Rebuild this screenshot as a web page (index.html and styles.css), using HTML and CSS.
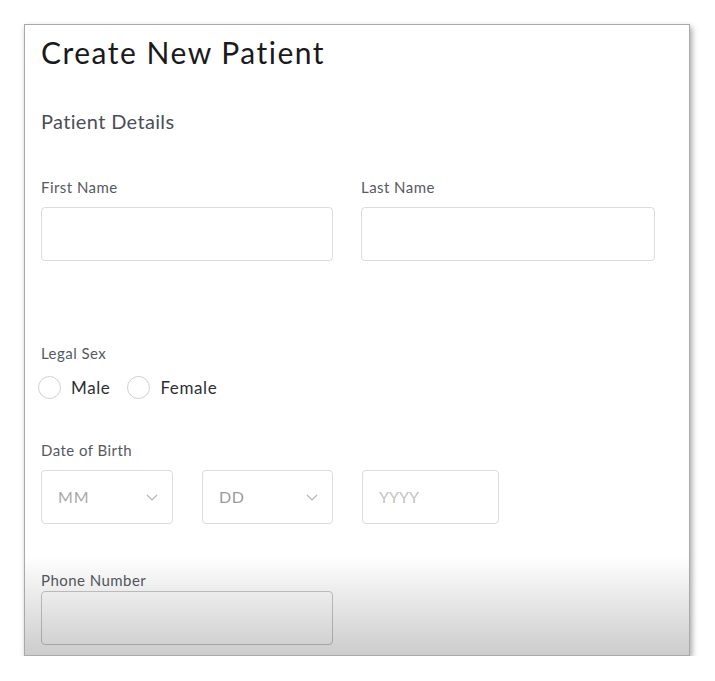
FILE: index.html
```html
<!DOCTYPE html>
<html lang="en">
<head>
<meta charset="utf-8">
<title>Create New Patient</title>
<link rel="stylesheet" href="styles.css">
</head>
<body>
<div class="card">
  <h1 class="title">Create New Patient</h1>
  <h2 class="section">Patient Details</h2>

  <div class="name-row">
    <div class="field">
      <label class="label">First Name</label>
      <div class="input"></div>
    </div>
    <div class="field">
      <label class="label">Last Name</label>
      <div class="input"></div>
    </div>
  </div>

  <div class="field sex">
    <label class="label">Legal Sex</label>
    <div class="radios">
      <span class="radio"><span class="circle"></span>Male</span>
      <span class="radio"><span class="circle"></span>Female</span>
    </div>
  </div>

  <div class="field dob">
    <label class="label">Date of Birth</label>
    <div class="date-row">
      <div class="select mm"><span class="ph ph-mm">MM</span>
        <svg class="chev" width="12" height="7" viewBox="0 0 12 7"><path d="M1 1l5 5 5-5" fill="none" stroke="#b5b5b5" stroke-width="1.2"/></svg>
      </div>
      <div class="select dd"><span class="ph ph-dd">DD</span>
        <svg class="chev" width="12" height="7" viewBox="0 0 12 7"><path d="M1 1l5 5 5-5" fill="none" stroke="#b5b5b5" stroke-width="1.2"/></svg>
      </div>
      <div class="select yyyy"><span class="ph ph-yy">YYYY</span></div>
    </div>
  </div>

  <div class="field phone">
    <label class="label">Phone Number</label>
    <div class="input phone-input"></div>
  </div>
</div>
</body>
</html>
```

FILE: styles.css
```css
html, body {
  margin: 0;
  padding: 0;
  background: #ffffff;
}
body {
  padding: 24px 0 0 24px;
  font-family: Lato, "Noto Sans", sans-serif;
}
.card {
  position: relative;
  border: 1px solid #a9a9a9;
  background: #fff;
  box-shadow: 2px 3px 6px rgba(0,0,0,0.35);
  padding: 9px 33px 10px 16px;
  box-sizing: content-box;
  width: 615px;
}
.card::after {
  content: "";
  position: absolute;
  left: 0;
  right: 0;
  bottom: 0;
  height: 100px;
  background: linear-gradient(to bottom, rgba(0,0,0,0), rgba(0,0,0,0.2));
  pointer-events: none;
}
.title {
  margin: 0;
  font-size: 30px;
  line-height: 36px;
  font-weight: 400;
  letter-spacing: 1.5px;
  color: #1a1a1c;
}
.section {
  margin: 39px 0 0;
  font-size: 20px;
  line-height: 24px;
  font-weight: 400;
  letter-spacing: 0.35px;
  color: #4a4e57;
}
.name-row {
  display: grid;
  grid-template-columns: 292px 294px;
  column-gap: 28px;
  margin-top: 46px;
}
.field {
  display: flex;
  flex-direction: column;
}
.label {
  font-size: 15px;
  line-height: 17px;
  letter-spacing: 0.45px;
  color: #555a61;
}
.input {
  height: 52px;
  margin-top: 11px;
  border: 1px solid #dcdcdc;
  border-radius: 4px;
  background: #fff;
}
.sex {
  margin-top: 84px;
}
.radios {
  display: flex;
  align-items: center;
  margin-top: 14px;
  gap: 20px;
}
.radio {
  display: flex;
  align-items: center;
  font-size: 17px;
  line-height: 22px;
  letter-spacing: 0.6px;
  color: #2e2f33;
}
.circle {
  width: 21px;
  height: 21px;
  border: 1px solid #cfcfcf;
  border-radius: 50%;
  margin: 0 10px 0 -3px;
  background: #fff;
}
.dob {
  margin-top: 43px;
}
.date-row {
  display: flex;
  gap: 29px;
  margin-top: 11px;
}
.select {
  border: 1px solid #dcdcdc;
  border-radius: 4px;
  display: flex;
  align-items: center;
  justify-content: space-between;
  padding: 0 14px 0 16px;
  box-sizing: border-box;
  height: 54px;
}
.mm { width: 132px; }
.dd { width: 131px; }
.yyyy { width: 137px; }
.ph {
  font-size: 16px;
  line-height: 20px;
}
.ph-mm { color: #a9a9a9; letter-spacing: 1px; }
.ph-dd { color: #9b9b9b; letter-spacing: 0.5px; }
.ph-yy { color: #c3c3c3; }
.phone {
  margin-top: 48px;
}
.phone .input {
  margin-top: 2px;
  width: 290px;
  border-color: #c8c8c8;
}
```
